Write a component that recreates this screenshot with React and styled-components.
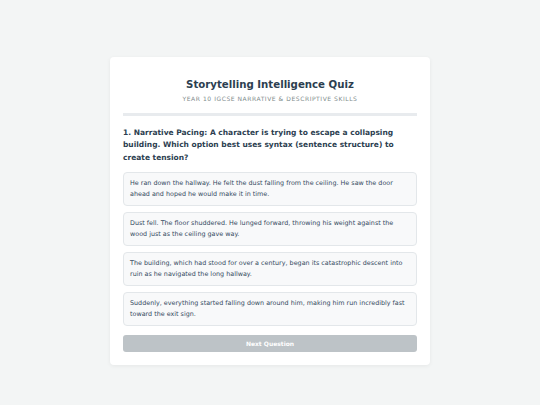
import React from 'react';
import styled, { createGlobalStyle } from 'styled-components';

const GlobalStyle = createGlobalStyle`
  html, body {
    margin: 0;
    padding: 0;
    background: #f3f5f5;
    font-family: "DejaVu Sans", Verdana, sans-serif;
  }
`;

const Page = styled.div`
  display: flex;
  justify-content: center;
  padding-top: 57px;
  min-height: 405px;
  box-sizing: border-box;
`;

const Card = styled.div`
  width: 320px;
  box-sizing: border-box;
  background: #fff;
  border-radius: 4px;
  box-shadow: 0 1px 4px rgba(0, 0, 0, 0.06);
  padding: 22px 13px 13px;
  align-self: flex-start;
`;

const Header = styled.div`
  text-align: center;
  padding-bottom: 11px;
  border-bottom: 3px solid #e8ebee;
  margin-bottom: 11px;
`;

const Title = styled.h1`
  margin: 0 0 5px;
  font-size: 10.2px;
  font-weight: bold;
  color: #2c3e50;
`;

const Subtitle = styled.div`
  font-size: 6px;
  letter-spacing: 0.55px;
  text-transform: uppercase;
  color: #7f8c8d;
`;

const Question = styled.div`
  font-size: 7.5px;
  font-weight: bold;
  line-height: 12.3px;
  color: #2c3e50;
  margin-bottom: 8px;
`;

const Options = styled.div`
  display: flex;
  flex-direction: column;
  gap: 6px;
`;

const Option = styled.div`
  border: 1px solid #e3e7ea;
  border-radius: 4px;
  background: #f8f9fa;
  padding: 5px 6px;
  font-size: 6.4px;
  line-height: 11px;
  color: #34495e;
  min-height: 22px;
  display: flex;
  align-items: center;
`;

const Button = styled.button`
  display: block;
  width: 100%;
  margin-top: 9px;
  height: 17px;
  border: none;
  border-radius: 3px;
  background: #bdc3c7;
  color: #fff;
  font-family: inherit;
  font-size: 6px;
  font-weight: bold;
`;

const options = [
  'He ran down the hallway. He felt the dust falling from the ceiling. He saw the door ahead and hoped he would make it in time.',
  'Dust fell. The floor shuddered. He lunged forward, throwing his weight against the wood just as the ceiling gave way.',
  'The building, which had stood for over a century, began its catastrophic descent into ruin as he navigated the long hallway.',
  'Suddenly, everything started falling down around him, making him run incredibly fast toward the exit sign.',
];

export default function App() {
  return (
    <>
      <GlobalStyle />
      <Page>
        <Card>
          <Header>
            <Title>Storytelling Intelligence Quiz</Title>
            <Subtitle>Year 10 IGCSE Narrative &amp; Descriptive Skills</Subtitle>
          </Header>
          <Question>
            1. Narrative Pacing: A character is trying to escape a collapsing building. Which option best uses syntax (sentence structure) to create tension?
          </Question>
          <Options>
            {options.map((o) => (
              <Option key={o}>{o}</Option>
            ))}
          </Options>
          <Button disabled>Next Question</Button>
        </Card>
      </Page>
    </>
  );
}
